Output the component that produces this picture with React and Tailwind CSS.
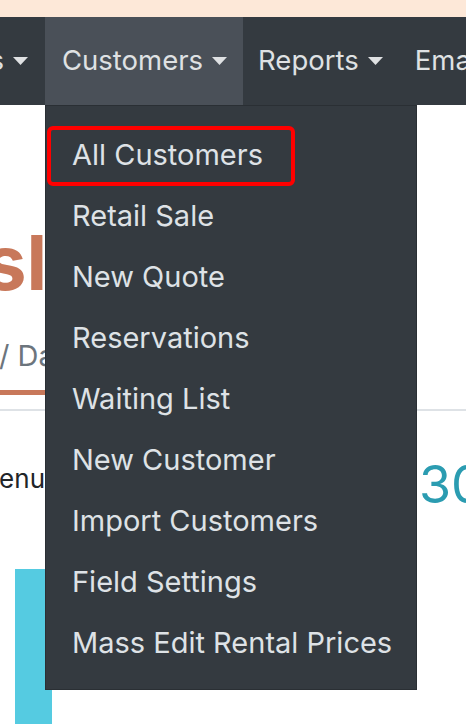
const ITEMS = [
  'All Customers', 'Retail Sale', 'New Quote', 'Reservations', 'Waiting List',
  'New Customer', 'Import Customers', 'Field Settings', 'Mass Edit Rental Prices'
]

function Caret() {
  return (
    <svg width="15" height="8" viewBox="0 0 15 8" className="shrink-0">
      <path d="M0 0h15L7.5 8z" fill="currentColor" />
    </svg>
  )
}

export default function App() {
  return (
    <div className="relative w-[466px] h-[724px] overflow-hidden bg-white font-['Inter',sans-serif]">
      <div className="h-[17px] bg-[#fde8d8]" />

      {/* top nav */}
      <nav className="flex h-[88px] bg-[#343a40] text-[27.5px] text-[#dfe1e3] whitespace-nowrap">
        <div className="flex w-[45px] shrink-0 items-center justify-end gap-[9px] overflow-hidden pr-[17px]">
          <span>Items</span>
          <Caret />
        </div>
        <div className="flex shrink-0 items-center gap-[9px] bg-[#4a5058] pl-[17px] pr-[16px]">
          <span>Customers</span>
          <Caret />
        </div>
        <div className="flex shrink-0 items-center gap-[9px] pl-[15px] pr-[16px]">
          <span>Reports</span>
          <Caret />
        </div>
        <div className="flex shrink-0 items-center px-[16px]">Email</div>
      </nav>

      {/* page behind the menu */}
      <main className="overflow-hidden">
        <div className="mt-[119px] h-[76px] text-[76px] font-bold leading-none text-[#c8785a] whitespace-nowrap">
          <span className="ml-[-16px]">sl</span>
        </div>
        <div className="mt-[41px] h-[29px] text-[29px] leading-none text-[#6c757d] whitespace-nowrap">
          <span className="ml-[-1px]">/ Dashboard</span>
        </div>
        <div className="mt-[20px] h-[5px] w-[200px] bg-[#c8785a]" />
        <div className="mt-[14px] h-[2px] bg-[#dee2e6]" />
        <div className="flex mt-[48px] h-[52px]">
          <div className="w-[45px] shrink-0 overflow-hidden pt-[7px] text-[26px] leading-none text-[#212529] whitespace-nowrap">
            <span className="ml-[-46px]">Revenue</span>
          </div>
          <div className="ml-[374px] text-[52px] leading-none text-[#2b9cb1] whitespace-nowrap">30,420</div>
        </div>
        <div className="mt-[58px] ml-[15px] h-[200px] w-[37px] bg-[#55cbe1]" />
      </main>

      {/* dropdown */}
      <div className="absolute left-[45px] top-[105px] w-[372px] h-[585px] border border-[#2a2f34] bg-[#343a40] pt-[18px] text-[29px] text-[#dee2e6]">
        {ITEMS.map(item => (
          <div key={item} className="flex h-[61px] items-center pl-[26px] whitespace-nowrap">{item}</div>
        ))}
        <div className="absolute left-[1px] top-[20px] h-[60px] w-[248px] rounded-[6px] border-4 border-[#ff0000]" />
      </div>
    </div>
  )
}
